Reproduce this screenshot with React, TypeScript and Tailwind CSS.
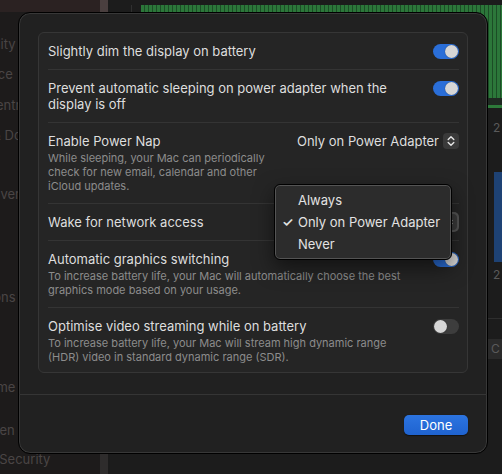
import React from "react";

const sidebarItems = [
	{ label: "", cls: "h-[18px]" },
	{ label: "Accessibility", cls: "h-[30px]" },
	{ label: "Appearance", cls: "h-[30px]" },
	{ label: "Control Centre", cls: "h-[31px]" },
	{ label: "Desktop & Dock", cls: "h-[29px]" },
	{ label: "Displays", cls: "h-[30px]" },
	{ label: "Screen Saver", cls: "h-[30px]" },
	{ label: "Wallpaper", cls: "h-[30px]" },
	{ label: "", cls: "h-[43px]" },
	{ label: "Notifications", cls: "h-[30px]" },
	{ label: "Sound", cls: "h-[30px]" },
	{ label: "Focus", cls: "h-[30px]" },
	{ label: "Screen Time", cls: "h-[30px]" },
	{ label: "", cls: "h-[13px]" },
	{ label: "Lock Screen", cls: "h-[30px]" },
	{ label: "Privacy & Security", cls: "h-[28px]" },
];

const Toggle = ({ on }: { on: boolean }) => (
	<div
		className={
			on
				? "flex items-center justify-end w-[26px] h-[15px] p-px rounded-full bg-[#2a6ed8] shrink-0"
				: "flex items-center justify-start w-[26px] h-[15px] p-px rounded-full bg-[#3d3d3d] shrink-0"
		}
	>
		<div className="w-[13px] h-[13px] rounded-full bg-[#d6d6d6] shadow-[0_0_1px_rgba(0,0,0,0.6)]" />
	</div>
);

const Stepper = () => (
	<div className="flex items-center justify-center w-[16px] h-[16px] rounded-[4px] bg-[#3a3a3a]">
		<svg width="10" height="12" viewBox="0 0 10 12" fill="none">
			<path d="M2.2 4.4 L5 1.7 L7.8 4.4" stroke="#e6e6e6" strokeWidth="1.4" strokeLinecap="round" strokeLinejoin="round" />
			<path d="M2.2 7.6 L5 10.3 L7.8 7.6" stroke="#e6e6e6" strokeWidth="1.4" strokeLinecap="round" strokeLinejoin="round" />
		</svg>
	</div>
);

const Row = ({
	title,
	sub,
	right,
	last,
	center,
}: {
	title: React.ReactNode;
	sub?: React.ReactNode;
	right?: React.ReactNode;
	last?: boolean;
	center?: boolean;
}) => (
	<div
		className={[
			"flex justify-between ml-[9px] mr-[8px] pt-[10px]",
			center ? "items-center" : "items-start",
			last ? "pb-[8px]" : "pb-[10px] border-b border-[#343434]",
		].join(" ")}
	>
		<div className="flex flex-col gap-[2px]">
			<div className="text-[13px] leading-[16px] text-[#dedede] whitespace-nowrap">{title}</div>
			{sub && (
				<div className="text-[11px] leading-[14px] text-[#8c8c8c] whitespace-nowrap">{sub}</div>
			)}
		</div>
		<div className={center ? "h-[16px] flex items-center" : "pt-px"}>{right}</div>
	</div>
);

const App = () => {
	return (
		<div className="relative w-[502px] h-[474px] overflow-hidden bg-[#1b1b1b] font-['Inter',sans-serif]">
			{/* settings window behind the sheet */}
			<div className="flex h-full">
				<aside className="w-[100px] flex flex-col bg-[#1d1b1b] overflow-hidden">
					<div className="h-[12px] bg-[#2b2222]" />
					{sidebarItems.map((item, i) => (
						<div
							key={i}
							className={
								"flex items-center -ml-[62px] text-[13px] text-[#4a4545] whitespace-nowrap " + item.cls
							}
						>
							{item.label}
						</div>
					))}
				</aside>
				<div className="w-[8px] flex flex-col">
					<div className="h-[12px] bg-[#4a3f3f]" />
					<div className="flex-1 bg-[#2e2c2c]" />
				</div>
				<div className="w-[2px]" />
				<main className="flex-1 flex flex-col bg-[#1c1c1c]">
					<div className="h-[5px] ml-[31px]" />
					<div className="flex h-[93px]">
						<div className="w-[21px]" />
						<div className="w-px bg-[#303030]" />
						<div className="w-[9px]" />
						<div className="flex-1 bg-[repeating-linear-gradient(90deg,#2c773a_0px,#2c773a_3px,#1c4d26_3px,#1c4d26_4px)]" />
					</div>
					<div className="h-[7px] ml-[31px] bg-[#1f2922]" />
					<div className="h-[3px] ml-[31px] bg-[#2d7a3a]" />
					<div className="self-end w-[14px] flex flex-col">
						<div className="h-[12px]" />
						<div className="h-[16px] pl-[5px] text-[12px] leading-[16px] text-[#5a5a5a]">2</div>
						<div className="h-[36px]" />
						<div className="h-[90px] ml-[6px] bg-[#1e4274]" />
						<div className="h-[5px]" />
						<div className="h-[16px] pl-[5px] text-[12px] leading-[16px] text-[#5a5a5a]">2</div>
						<div className="h-[36px] border-b border-[#2e2e2e]" />
						<div className="h-[20px]" />
						<div className="h-[20px] pl-[3px] bg-[#2a2a2a] text-[12px] leading-[20px] text-[#5a5a5a]">C</div>
					</div>
				</main>
			</div>

			{/* sheet */}
			<div className="absolute left-[18px] top-[12px] w-[470px] h-[442px] flex flex-col rounded-[12px] border border-black bg-[#212121] shadow-[inset_0_0_0_1px_#383838]">
				<div className="px-[19px] pt-[19px]">
					<div className="rounded-[6px] border border-[#363636] bg-[#252525]">
						<Row title="Slightly dim the display on battery" right={<Toggle on />} />
						<Row
							title={
								<>
									Prevent automatic sleeping on power adapter when the
									<br />
									display is off
								</>
							}
							right={<Toggle on />}
						/>
						<Row
							title="Enable Power Nap"
							sub={
								<>
									While sleeping, your Mac can periodically
									<br />
									check for new email, calendar and other
									<br />
									iCloud updates.
								</>
							}
							right={
								<div className="flex items-center gap-[4px] -mt-[1px]">
									<span className="text-[13px] leading-[16px] text-[#dedede]">Only on Power Adapter</span>
									<Stepper />
								</div>
							}
						/>
						<Row
							title="Wake for network access"
							center
							right={
								<div className="flex items-center justify-end gap-[4px] w-[165px] h-[20px] pr-[2px] rounded-[5px] bg-[#555555]">
									<span className="text-[13px] leading-[16px] text-[#dedede]">Only on Power Adapter</span>
									<Stepper />
								</div>
							}
						/>
						<Row
							title="Automatic graphics switching"
							sub={
								<>
									To increase battery life, your Mac will automatically choose the best
									<br />
									graphics mode based on your usage.
								</>
							}
							right={<Toggle on />}
						/>
						<Row
							title="Optimise video streaming while on battery"
							sub={
								<>
									To increase battery life, your Mac will stream high dynamic range
									<br />
									(HDR) video in standard dynamic range (SDR).
								</>
							}
							right={<Toggle on={false} />}
							last
						/>
					</div>
				</div>
				<div className="mt-[21px] h-px bg-[#353535]" />
				<div className="flex justify-end px-[19px] pt-[20px]">
					<button className="w-[64px] h-[20px] rounded-[5px] bg-gradient-to-b from-[#2c74e0] to-[#1f63d0] text-[13px] leading-[20px] text-white shadow-[0_0.5px_1px_rgba(0,0,0,0.5)]">
						Done
					</button>
				</div>
			</div>

			{/* open popup menu */}
			<div className="absolute left-[274px] top-[184px] w-[178px] h-[76px] py-[5px] rounded-[6px] border border-black bg-[#2c2c2c] shadow-[inset_0_0_0_1px_#545454,0_8px_20px_rgba(0,0,0,0.5)]">
				{[
					{ label: "Always", checked: false },
					{ label: "Only on Power Adapter", checked: true },
					{ label: "Never", checked: false },
				].map((item) => (
					<div key={item.label} className="flex items-center h-[22px] text-[13px] text-[#e2e2e2]">
						<span className="w-[23px] pl-[7px] text-[13px] font-semibold">{item.checked ? "✓" : ""}</span>
						<span>{item.label}</span>
					</div>
				))}
			</div>
		</div>
	);
};

export default App;
